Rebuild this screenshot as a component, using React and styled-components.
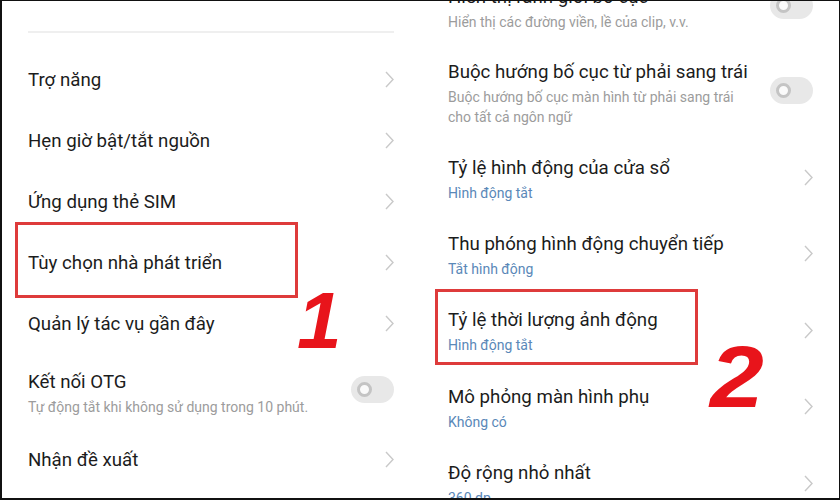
import React from "react";
import styled, { createGlobalStyle } from "styled-components";

const GlobalStyle = createGlobalStyle`
  html, body { margin: 0; padding: 0; background: #fff; }
  body { font-family: Roboto, "Noto Sans", "Liberation Sans", sans-serif; }
`;

const Frame = styled.div`
  position: relative;
  box-sizing: border-box;
  width: 840px;
  height: 500px;
  display: grid;
  grid-template-columns: 418px 419px;
  overflow: hidden;
  background: #fff;
  border-top: 1px solid #111;
  border-left: 2px solid #111;
  border-right: 1px solid #111;
  border-bottom: 2px solid #111;
`;

const Panel = styled.section`
  box-sizing: border-box;
  padding: 0 26px 0 ${(p) => (p.$right ? 28 : 26)}px;
  overflow: hidden;
`;

const Divider = styled.div`
  height: 2px;
  background: #efefef;
  margin: 30px 0 16px;
`;

const List = styled.div`
  display: flex;
  flex-direction: column;
  margin-top: ${(p) => p.$offset || 0}px;
`;

const Row = styled.div`
  display: flex;
  align-items: center;
  justify-content: space-between;
  gap: 16px;
  padding: ${(p) => p.$pad}px 0;
`;

const Texts = styled.div`
  display: flex;
  flex-direction: column;
  min-width: 0;
`;

const Title = styled.div`
  font-size: 18.7px;
  line-height: 30px;
  color: #1c1c1c;
  white-space: nowrap;
`;

const Sub = styled.div`
  font-size: 14px;
  line-height: 20px;
  color: ${(p) => (p.$blue ? "#5a88b8" : "#9c9c9c")};
  white-space: nowrap;
`;

const Track = styled.div`
  flex: none;
  box-sizing: border-box;
  width: 43px;
  height: 27px;
  border-radius: 14px;
  background: #e8e8e8;
  display: flex;
  align-items: center;
  padding-left: 6px;
  margin-top: -4px;
`;

const Knob = styled.div`
  box-sizing: border-box;
  width: 15px;
  height: 15px;
  border-radius: 50%;
  border: 3px solid #c4c4c4;
  background: #fafafa;
`;

const ChevronBox = styled.svg`
  flex: none;
  width: 9px;
  height: 17px;
`;

const Chevron = () => (
  <ChevronBox viewBox="0 0 9 17">
    <polyline points="1,1 8,8.5 1,16" fill="none" stroke="#c9c9c9" strokeWidth="1.4" />
  </ChevronBox>
);

const Toggle = () => (
  <Track>
    <Knob />
  </Track>
);

const Highlight = styled.div`
  position: absolute;
  box-sizing: border-box;
  border: 3px solid #de3b3b;
  left: ${(p) => p.$x}px;
  top: ${(p) => p.$y}px;
  width: ${(p) => p.$w}px;
  height: ${(p) => p.$h}px;
`;

const StepNumber = styled.div`
  position: absolute;
  left: ${(p) => p.$x}px;
  top: ${(p) => p.$y}px;
  font-family: "Liberation Sans", Arial, sans-serif;
  font-weight: 700;
  font-style: italic;
  font-size: ${(p) => p.$size}px;
  line-height: 1;
  color: #e8141b;
  transform: scaleX(${(p) => p.$sx || 1});
  transform-origin: left top;
`;

const leftItems = [
  { title: "Trợ năng" },
  { title: "Hẹn giờ bật/tắt nguồn" },
  { title: "Ứng dụng thẻ SIM" },
  { title: "Tùy chọn nhà phát triển" },
  { title: "Quản lý tác vụ gần đây" },
  { title: "Kết nối OTG", sub: ["Tự động tắt khi không sử dụng trong 10 phút."], toggle: true },
  { title: "Nhận đề xuất" },
];

const rightItems = [
  { title: "Hiển thị ranh giới bố cục", sub: ["Hiển thị các đường viền, lề của clip, v.v."], toggle: true },
  {
    title: "Buộc hướng bố cục từ phải sang trái",
    sub: ["Buộc hướng bố cục màn hình từ phải sang trái", "cho tất cả ngôn ngữ"],
    toggle: true,
    tight: true,
  },
  { title: "Tỷ lệ hình động của cửa sổ", sub: ["Hình động tắt"], blue: true },
  { title: "Thu phóng hình động chuyển tiếp", sub: ["Tắt hình động"], blue: true },
  { title: "Tỷ lệ thời lượng ảnh động", sub: ["Hình động tắt"], blue: true },
  { title: "Mô phỏng màn hình phụ", sub: ["Không có"], blue: true },
  { title: "Độ rộng nhỏ nhất", sub: ["360 dp"], blue: true },
];

const Item = ({ item, pad }) => (
  <Row $pad={pad}>
    <Texts>
      <Title>{item.title}</Title>
      {item.sub && (
        <Sub $blue={item.blue}>
          {item.sub.map((line, i) => (
            <React.Fragment key={i}>
              {i > 0 && <br />}
              {line}
            </React.Fragment>
          ))}
        </Sub>
      )}
    </Texts>
    {item.toggle ? <Toggle /> : <Chevron />}
  </Row>
);

export default function App() {
  return (
    <>
      <GlobalStyle />
      <Frame>
        <Panel>
          <Divider />
          <List>
            {leftItems.map((it, i) => (
              <Item key={i} item={it} pad={it.sub ? 12.5 : 15.5} />
            ))}
          </List>
        </Panel>
        <Panel $right>
          <List $offset={-32}>
            {rightItems.map((it, i) => (
              <Item key={i} item={it} pad={it.tight ? 12 : 13.2} />
            ))}
          </List>
        </Panel>
        <Highlight $x={13} $y={221} $w={283} $h={76} />
        <Highlight $x={433} $y={288} $w={263} $h={76} />
        <StepNumber $x={295} $y={280} $size={80}>1</StepNumber>
        <StepNumber $x={708} $y={332} $size={88} $sx={1.1}>2</StepNumber>
      </Frame>
    </>
  );
}
